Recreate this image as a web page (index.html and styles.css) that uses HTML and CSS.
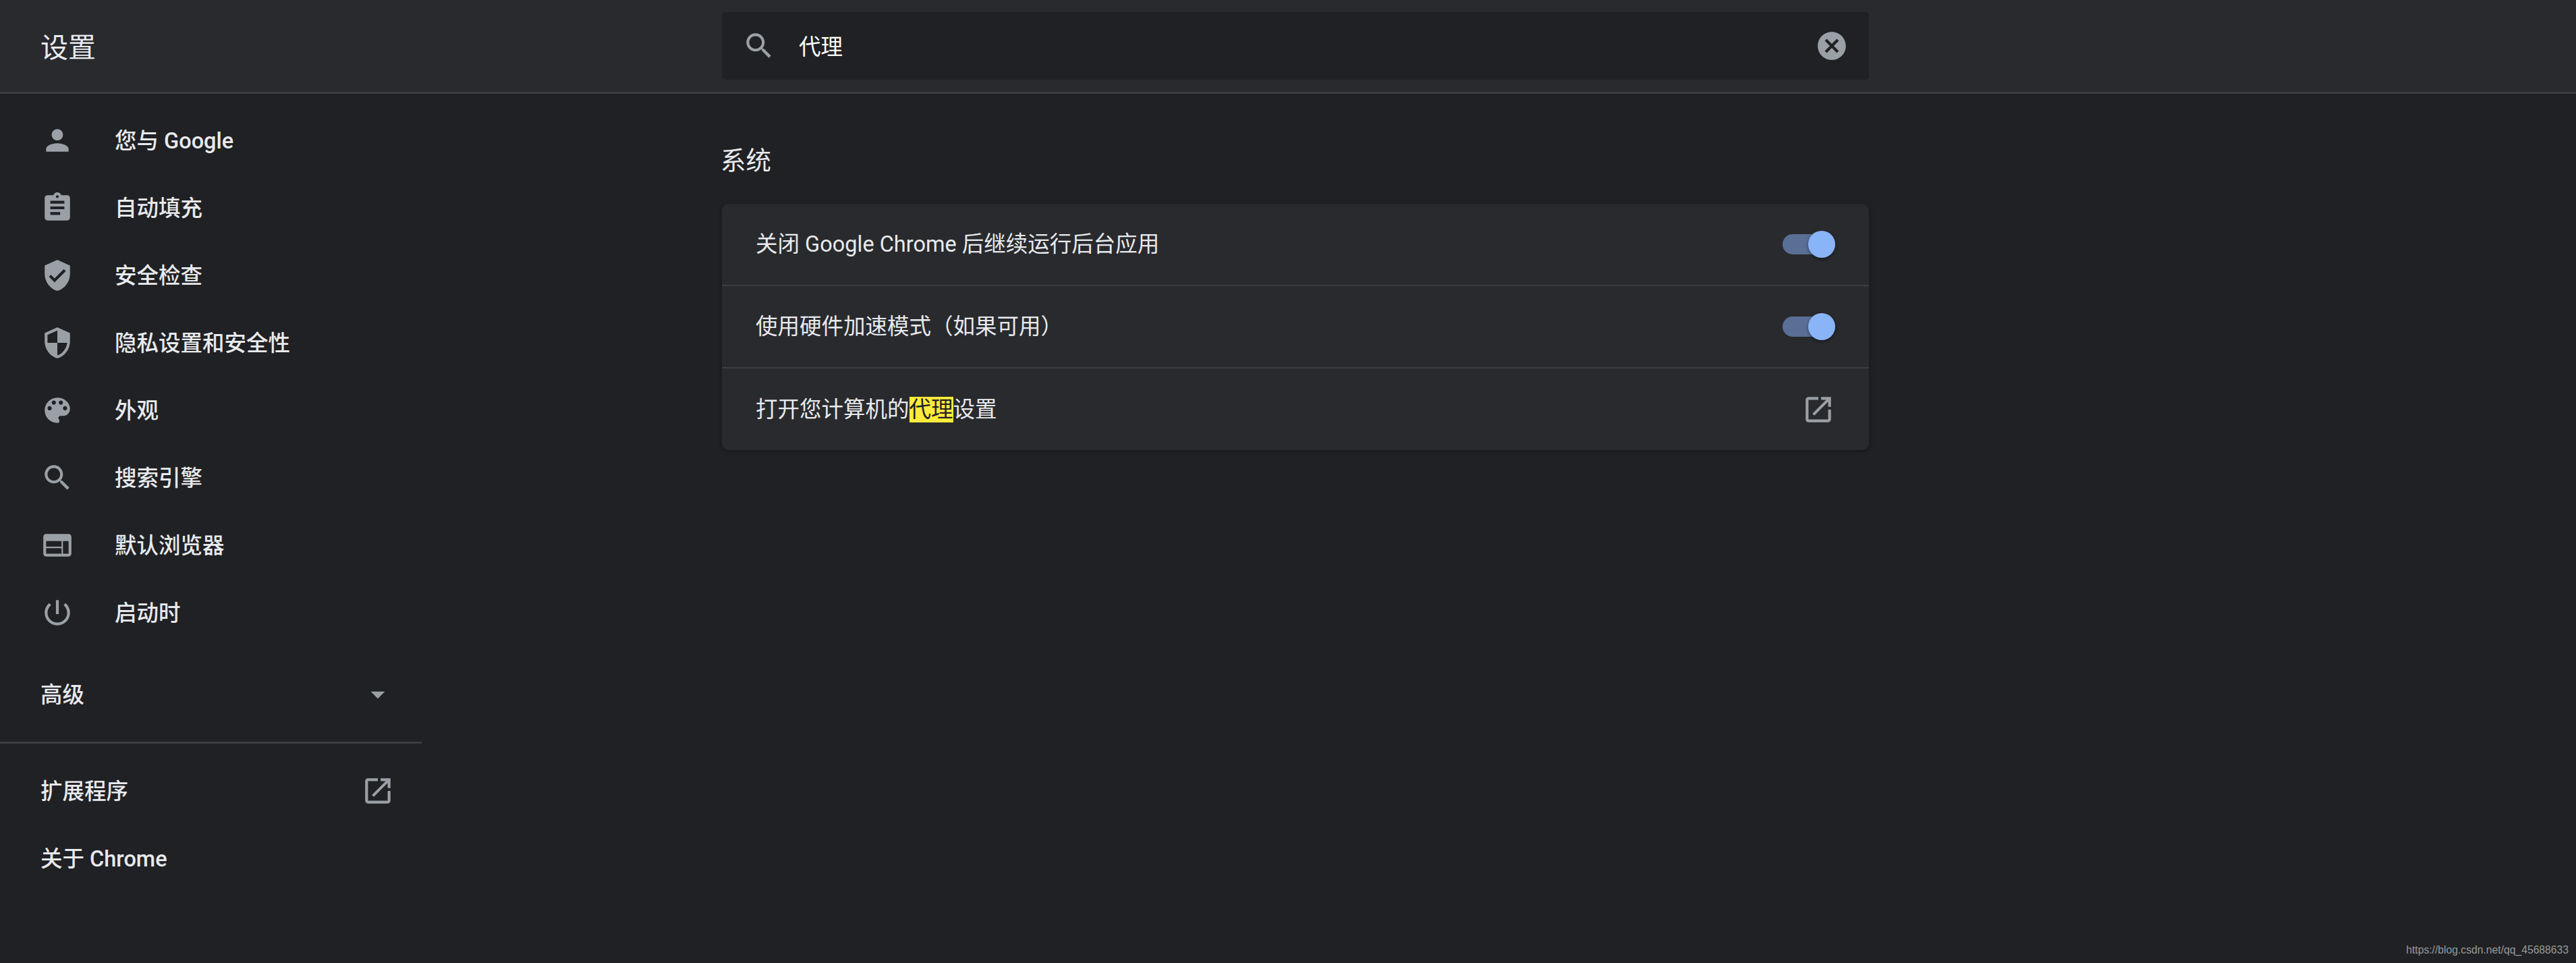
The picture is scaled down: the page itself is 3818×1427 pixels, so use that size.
FILE: index.html
```html
<!DOCTYPE html>
<html lang="zh-CN">
<head>
    <meta charset="UTF-8">
    <title>设置</title>
    <link rel="stylesheet" href="styles.css">
</head>
<body>
    <header class="toolbar">
        <h1 class="toolbar-title">设置</h1>
        <div class="search-box">
            <svg class="icon" viewBox="0 0 24 24"><path d="M15.5 14h-.79l-.28-.27C15.41 12.59 16 11.11 16 9.5 16 5.91 13.09 3 9.5 3S3 5.91 3 9.5 5.91 16 9.5 16c1.61 0 3.09-.59 4.23-1.57l.27.28v.79l5 4.99L20.49 19l-4.99-5zm-6 0C7.01 14 5 11.99 5 9.5S7.01 5 9.5 5 14 7.01 14 9.5 11.99 14 9.5 14z"/></svg>
            <span class="search-text">代理</span>
            <svg class="icon" viewBox="0 0 24 24"><path d="M12 2C6.47 2 2 6.47 2 12s4.47 10 10 10 10-4.47 10-10S17.53 2 12 2zm5 13.59L15.59 17 12 13.41 8.41 17 7 15.59 10.59 12 7 8.41 8.41 7 12 10.59 15.59 7 17 8.41 13.41 12 17 15.59z"/></svg>
        </div>
    </header>

    <div class="main">
        <nav class="sidebar">
            <a class="nav-item">
                <svg class="icon" viewBox="0 0 24 24"><path d="M12 12c2.21 0 4-1.79 4-4s-1.79-4-4-4-4 1.79-4 4 1.79 4 4 4zm0 2c-2.67 0-8 1.34-8 4v2h16v-2c0-2.66-5.33-4-8-4z"/></svg>
                <span>您与 Google</span>
            </a>
            <a class="nav-item">
                <svg class="icon" viewBox="0 0 24 24"><path d="M19 3h-4.18C14.4 1.84 13.3 1 12 1c-1.3 0-2.4.84-2.82 2H5c-1.1 0-2 .9-2 2v14c0 1.1.9 2 2 2h14c1.1 0 2-.9 2-2V5c0-1.1-.9-2-2-2zm-7 0c.55 0 1 .45 1 1s-.45 1-1 1-1-.45-1-1 .45-1 1-1zm2 14H7v-2h7v2zm3-4H7v-2h10v2zm0-4H7V7h10v2z"/></svg>
                <span>自动填充</span>
            </a>
            <a class="nav-item">
                <svg class="icon" viewBox="0 0 24 24"><path d="M12 1L3 5v6c0 5.55 3.84 10.74 9 12 5.16-1.26 9-6.45 9-12V5l-9-4zm-2 16l-4-4 1.41-1.41L10 14.17l6.59-6.59L18 9l-8 8z"/></svg>
                <span>安全检查</span>
            </a>
            <a class="nav-item">
                <svg class="icon" viewBox="0 0 24 24"><path d="M12 1L3 5v6c0 5.55 3.84 10.74 9 12 5.16-1.26 9-6.45 9-12V5l-9-4zm0 10.99h7c-.53 4.12-3.28 7.79-7 8.94V12H5V6.3l7-3.11v8.8z"/></svg>
                <span>隐私设置和安全性</span>
            </a>
            <a class="nav-item">
                <svg class="icon" viewBox="0 0 24 24"><path d="M12 3c-4.97 0-9 4.03-9 9s4.03 9 9 9c.83 0 1.5-.67 1.5-1.5 0-.39-.15-.74-.39-1.01-.23-.26-.38-.61-.38-.99 0-.83.67-1.5 1.5-1.5H16c2.76 0 5-2.24 5-5 0-4.42-4.03-8-9-8zm-5.5 9c-.83 0-1.5-.67-1.5-1.5S5.67 9 6.5 9 8 9.67 8 10.5 7.33 12 6.5 12zm3-4C8.67 8 8 7.33 8 6.5S8.67 5 9.5 5s1.5.67 1.5 1.5S10.33 8 9.5 8zm5 0c-.83 0-1.5-.67-1.5-1.5S13.67 5 14.5 5s1.5.67 1.5 1.5S15.33 8 14.5 8zm3 4c-.83 0-1.5-.67-1.5-1.5S16.67 9 17.5 9s1.5.67 1.5 1.5-.67 1.5-1.5 1.5z"/></svg>
                <span>外观</span>
            </a>
            <a class="nav-item">
                <svg class="icon" viewBox="0 0 24 24"><path d="M15.5 14h-.79l-.28-.27C15.41 12.59 16 11.11 16 9.5 16 5.91 13.09 3 9.5 3S3 5.91 3 9.5 5.91 16 9.5 16c1.61 0 3.09-.59 4.23-1.57l.27.28v.79l5 4.99L20.49 19l-4.99-5zm-6 0C7.01 14 5 11.99 5 9.5S7.01 5 9.5 5 14 7.01 14 9.5 11.99 14 9.5 14z"/></svg>
                <span>搜索引擎</span>
            </a>
            <a class="nav-item">
                <svg class="icon" viewBox="0 0 24 24"><path d="M20 4H4c-1.1 0-1.99.9-1.99 2L2 18c0 1.1.9 2 2 2h16c1.1 0 2-.9 2-2V6c0-1.1-.9-2-2-2zm-5 14H4v-4h11v4zm0-5H4V9h11v4zm5 5h-4V9h4v9z"/></svg>
                <span>默认浏览器</span>
            </a>
            <a class="nav-item">
                <svg class="icon" viewBox="0 0 24 24"><path d="M13 3h-2v10h2V3zm4.83 2.17l-1.42 1.42C17.99 7.86 19 9.81 19 12c0 3.87-3.13 7-7 7s-7-3.13-7-7c0-2.19 1.01-4.14 2.58-5.42L6.17 5.17C4.23 6.82 3 9.26 3 12c0 4.97 4.03 9 9 9s9-4.03 9-9c0-2.74-1.23-5.18-3.17-6.83z"/></svg>
                <span>启动时</span>
            </a>

            <a class="nav-item nav-advanced">
                <span>高级</span>
                <svg class="icon" viewBox="0 0 24 24"><path d="M7 10l5 5 5-5z"/></svg>
            </a>
            <div class="nav-divider"></div>
            <a class="nav-item nav-plain">
                <span>扩展程序</span>
                <svg class="icon" viewBox="0 0 24 24"><path d="M19 19H5V5h7V3H5c-1.11 0-2 .9-2 2v14c0 1.1.89 2 2 2h14c1.1 0 2-.9 2-2v-7h-2v7zM14 3v2h3.59l-9.83 9.83 1.41 1.41L19 6.41V10h2V3h-7z"/></svg>
            </a>
            <a class="nav-item nav-plain">
                <span>关于 Chrome</span>
            </a>
        </nav>

        <main class="content">
            <h2 class="section-title">系统</h2>
            <section class="card">
                <div class="card-row">
                    <span>关闭 Google Chrome 后继续运行后台应用</span>
                    <div class="toggle"><div class="toggle-knob"></div></div>
                </div>
                <div class="card-row">
                    <span>使用硬件加速模式（如果可用）</span>
                    <div class="toggle"><div class="toggle-knob"></div></div>
                </div>
                <div class="card-row">
                    <span>打开您计算机的<mark class="hit">代理</mark>设置</span>
                    <svg class="icon" viewBox="0 0 24 24"><path d="M19 19H5V5h7V3H5c-1.11 0-2 .9-2 2v14c0 1.1.89 2 2 2h14c1.1 0 2-.9 2-2v-7h-2v7zM14 3v2h3.59l-9.83 9.83 1.41 1.41L19 6.41V10h2V3h-7z"/></svg>
                </div>
            </section>
        </main>
    </div>

    <div class="watermark">https://blog.csdn.net/qq_45688633</div>
</body>
</html>
```
FILE: styles.css
```css
html, body {
    height: 100%;
}
body {
    margin: 0;
    background-color: #202124;
    color: #e8eaed;
    font-family: Roboto, "Noto Sans CJK SC", sans-serif;
    font-size: 32.5px;
    overflow: hidden;
}
.icon {
    width: 50px;
    height: 50px;
    flex: none;
    fill: #9aa0a6;
}

/* toolbar */
.toolbar {
    display: flex;
    align-items: center;
    height: 136px;
    padding-left: 60px;
    background-color: #292a2d;
    border-bottom: 3px solid #3c3d40;
}
.toolbar-title {
    width: 1010px;
    margin: 0 0 2px;
    font-size: 41px;
    font-weight: 400;
}
.search-box {
    display: flex;
    align-items: center;
    box-sizing: border-box;
    width: 1700px;
    height: 100px;
    padding: 0 30px;
    background-color: #202124;
    border-radius: 5px;
}
.search-text {
    flex: 1;
    margin: 0 0 4px 34px;
    color: #fff;
}

/* sidebar */
.main {
    display: flex;
}
.sidebar {
    flex: none;
    width: 625px;
    padding-top: 19px;
}
.nav-item {
    display: flex;
    align-items: center;
    height: 100px;
    padding-left: 60px;
    gap: 60px;
    font-weight: 500;
}
.nav-item span {
    margin-bottom: 6px;
}
.nav-advanced,
.nav-plain {
    justify-content: space-between;
    padding-right: 40px;
}
.nav-advanced {
    margin-top: 21px;
}
.nav-divider {
    height: 3px;
    margin: 20px 0;
    background-color: #3c3d40;
}

/* content */
.content {
    width: 1700px;
    margin-left: 445px;
    padding-top: 69px;
}
.section-title {
    height: 60px;
    margin: 0 0 34px -2px;
    font-size: 37.5px;
    font-weight: 400;
    line-height: 60px;
}
.card {
    background-color: #292a2d;
    border-radius: 10px;
    box-shadow: 0 2px 6px rgba(0, 0, 0, 0.3);
}
.card-row {
    display: flex;
    align-items: center;
    justify-content: space-between;
    box-sizing: border-box;
    height: 120px;
    padding: 0 50px;
}
.card-row span {
    margin-bottom: 7px;
}
.card-row + .card-row {
    height: 122px;
    border-top: 2px solid #3c3d40;
}
.card-row:last-child {
    height: 123px;
}
.toggle {
    position: relative;
    width: 78px;
    height: 30px;
    background-color: #5a6f96;
    border-radius: 15px;
}
.toggle-knob {
    position: absolute;
    top: -5px;
    right: 0;
    width: 40px;
    height: 40px;
    background-color: #8ab4f8;
    border-radius: 50%;
    box-shadow: 0 2px 5px rgba(0, 0, 0, 0.4);
}
.hit {
    background-color: #ffeb3b;
    color: #202124;
}

.watermark {
    position: absolute;
    right: 11px;
    bottom: 10px;
    color: #9a9a9a;
    font-family: "Liberation Sans", sans-serif;
    font-size: 15.7px;
}
```
